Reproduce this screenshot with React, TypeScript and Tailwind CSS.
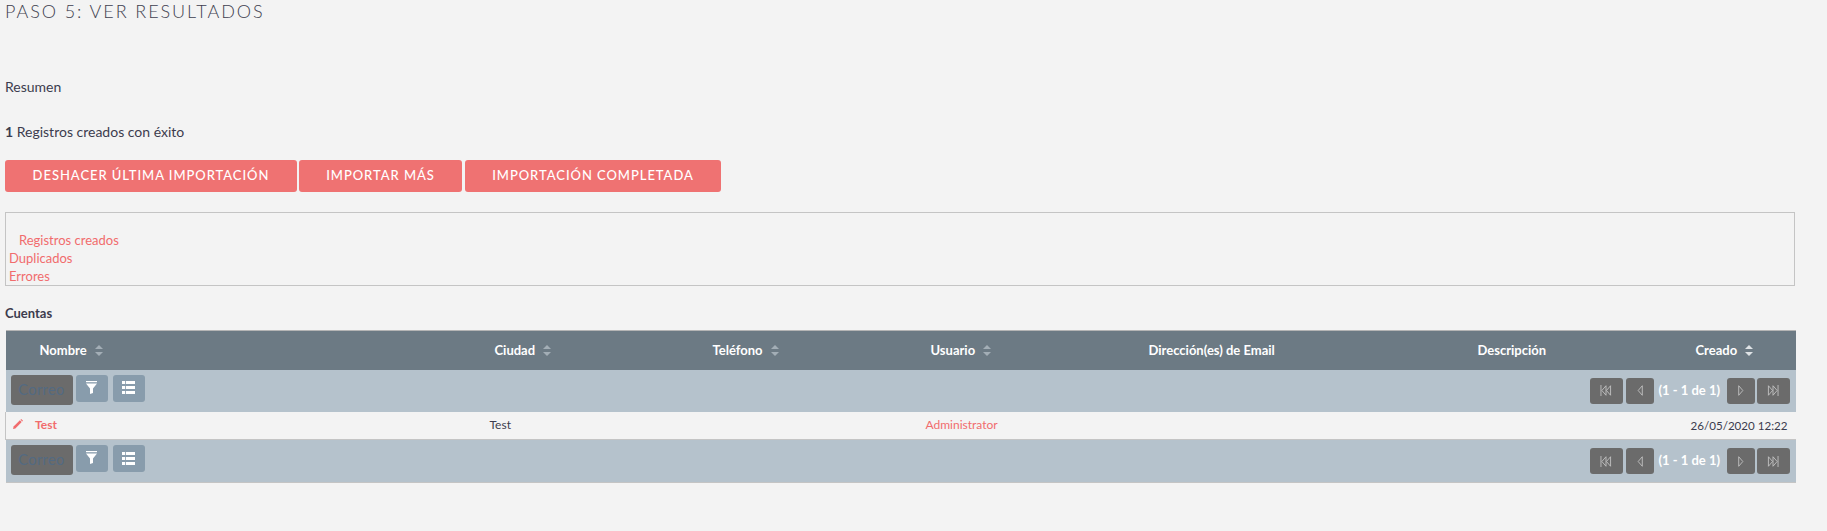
const LATO = "font-['Lato','Noto_Sans',sans-serif]";

const columns = [
  { label: 'Nombre', width: 'w-[484px]', pad: 'pl-[34px]', sort: 'idle' },
  { label: 'Ciudad', width: 'w-[218px]', pad: 'pl-[5px]', sort: 'idle' },
  { label: 'Teléfono', width: 'w-[218px]', pad: 'pl-[5px]', sort: 'idle' },
  { label: 'Usuario', width: 'w-[218px]', pad: 'pl-[5px]', sort: 'idle' },
  { label: 'Dirección(es) de Email', width: 'w-[329px]', pad: 'pl-[5px]', sort: '' },
  { label: 'Descripción', width: 'w-[218px]', pad: 'pl-[5px]', sort: '' },
  { label: 'Creado', width: 'w-[105px]', pad: 'pl-[5px]', sort: 'active' },
];

function SortIcon({ active }: { active: boolean }) {
  const fill = active ? '#dfe3e6' : '#a3aeb6';
  return (
    <svg width="8" height="11" viewBox="0 0 8 11" className="ml-2 inline-block align-[-1px]">
      <path d="M4 0 8 4H0z" fill={fill} />
      <path d="M0 7h8l-4 4z" fill={fill} />
    </svg>
  );
}

function FilterIcon() {
  return (
    <svg width="11" height="13" viewBox="0 0 11 13" fill="#ffffff" className="mb-[2px]">
      <rect x="0" y="0" width="11" height="1.2" />
      <path d="M0 2.500h11L7 7.500V12l-3 1V7.500z" />
    </svg>
  );
}

function ListIcon() {
  return (
    <svg width="13" height="13" viewBox="0 0 13 13" fill="#ffffff" className="mb-[1px]">
      <rect x="0" y="0" width="3" height="3" />
      <rect x="3.800" y="0" width="9.200" height="3" />
      <rect x="0" y="5" width="3" height="3" />
      <rect x="3.800" y="5" width="9.200" height="3" />
      <rect x="0" y="10" width="3" height="3" />
      <rect x="3.800" y="10" width="9.200" height="3" />
    </svg>
  );
}

function PencilIcon() {
  return (
    <svg width="10" height="10" viewBox="0 0 10 10" fill="#f16c6d" className="mb-[3px]">
      <path d="M0 10 .6 7.600 6.900 1.300 8.700 3.100 2.400 9.400z" />
      <path d="M7.500.7 8.200 0 10 1.800 9.300 2.500z" />
    </svg>
  );
}

function PageIcon({ kind }: { kind: 'first' | 'prev' | 'next' | 'last' }) {
  return (
    <svg width="12" height="11" viewBox="0 0 12 12" fill="none" stroke="#c9c9c9" strokeWidth="0.9">
      {kind === 'first' && (
        <>
          <path d="M.5 0v12" />
          <path d="M6 .8 1.500 6 6 11.200z" />
          <path d="M11 .8 6.500 6 11 11.200z" />
        </>
      )}
      {kind === 'prev' && <path d="M8.500.8 4 6l4.500 5.200z" />}
      {kind === 'next' && <path d="M3.500.8 8 6l-4.500 5.200z" />}
      {kind === 'last' && (
        <>
          <path d="M1 .8 5.500 6 1 11.200z" />
          <path d="M6 .8 10.500 6 6 11.200z" />
          <path d="M11.500 0v12" />
        </>
      )}
    </svg>
  );
}

function PageButton({ kind, wide }: { kind: 'first' | 'prev' | 'next' | 'last'; wide?: boolean }) {
  return (
    <button className={`flex h-[26px] items-center justify-center rounded-[3px] bg-[#6b6b6b] ${wide ? 'w-[33px]' : 'w-[28px]'}`}>
      <PageIcon kind={kind} />
    </button>
  );
}

function Toolbar({ bottom }: { bottom?: boolean }) {
  return (
    <tr>
      <td colSpan={7} className={`bg-[#b5c2cc] ${bottom ? 'border-b border-[#c4c4c4]' : ''}`}>
        <div className="flex h-[42px] items-start justify-between pl-[5px] pr-[6px] pt-[5px]">
          <div className="flex">
            <button className="h-[30px] w-[62px] rounded-[3px] bg-[#6b6b6b] text-[14.5px] tracking-[0.4px] text-[#536a82]">
              Correo
            </button>
            <button className="ml-[3px] flex h-[27px] w-[32px] items-center justify-center rounded-[3px] bg-[#889cac]">
              <FilterIcon />
            </button>
            <button className="ml-[5px] flex h-[27px] w-[32px] items-center justify-center rounded-[3px] bg-[#889cac]">
              <ListIcon />
            </button>
          </div>
          <div className="mt-[3px] flex items-center">
            <PageButton kind="first" wide />
            <div className="ml-[3px]">
              <PageButton kind="prev" />
            </div>
            <span className="ml-[5px] w-[68px] text-[13px] font-bold text-white">(1 - 1 de 1)</span>
            <PageButton kind="next" />
            <div className="ml-[2px]">
              <PageButton kind="last" wide />
            </div>
          </div>
        </div>
      </td>
    </tr>
  );
}

function ActionButton({ label, width }: { label: string; width: string }) {
  return (
    <button className={`${width} h-[32px] rounded-[3px] bg-[#ef7272] text-center text-[13px] font-medium tracking-[0.95px] text-white`}>
      {label}
    </button>
  );
}

export default function App() {
  return (
    <div className={`${LATO} h-[531px] overflow-hidden bg-[#f3f3f3] text-[14px] text-[#3c3c4e]`}>
      <h2 className="pl-[5px] text-[18px] font-light leading-[22px] tracking-[1.93px] text-[#3f3f50]">
        PASO 5: VER RESULTADOS
      </h2>
      <p className="mt-[55px] pl-[5px] leading-[20px]">Resumen</p>
      <p className="mt-[25px] pl-[5px] leading-[20px]">
        <b>1</b> Registros creados con éxito
      </p>
      <div className="mt-[18px] flex gap-[2px] pl-[5px]">
        <ActionButton width="w-[292px]" label="DESHACER ÚLTIMA IMPORTACIÓN" />
        <ActionButton width="w-[163px]" label="IMPORTAR MÁS" />
        <div className="pl-[1px]">
          <ActionButton width="w-[256px]" label="IMPORTACIÓN COMPLETADA" />
        </div>
      </div>
      <div className="ml-[5px] mt-[20px] h-[74px] w-[1790px] border border-[#c4c4c4] pl-[3px] pt-[18px] text-[13px] leading-[18px] text-[#f16c6d]">
        <div className="pl-[10px]">Registros creados</div>
        <div>Duplicados</div>
        <div>Errores</div>
      </div>
      <h3 className="mt-[17px] pl-[5px] text-[13px] font-bold leading-[20px]">Cuentas</h3>
      <table className="ml-[5px] mt-[7px] w-[1790px] table-fixed border-collapse">
        <thead>
          <tr className="h-[39px] border-t border-[#b5b5b5] bg-[#6c7a84] text-[13px] text-white">
            {columns.map((col) => (
              <th key={col.label} className={`${col.width} ${col.pad} text-left font-bold`}>
                {col.label}
                {col.sort && <SortIcon active={col.sort === 'active'} />}
              </th>
            ))}
          </tr>
        </thead>
        <tbody>
          <Toolbar />
          <tr className="h-[28px] border-b border-[#c4c4c4] text-[12px]">
            <td className="border-l border-[#c4c4c4]">
              <div className="flex items-center pl-[7px]">
                <PencilIcon />
                <a className="ml-[12px] font-bold text-[#f16c6d]">Test</a>
              </div>
            </td>
            <td>Test</td>
            <td></td>
            <td>
              <a className="text-[#f16c6d]">Administrator</a>
            </td>
            <td></td>
            <td></td>
            <td className="whitespace-nowrap pr-[8px] text-right text-[11.6px]">26/05/2020 12:22</td>
          </tr>
          <Toolbar bottom />
        </tbody>
      </table>
    </div>
  );
}
